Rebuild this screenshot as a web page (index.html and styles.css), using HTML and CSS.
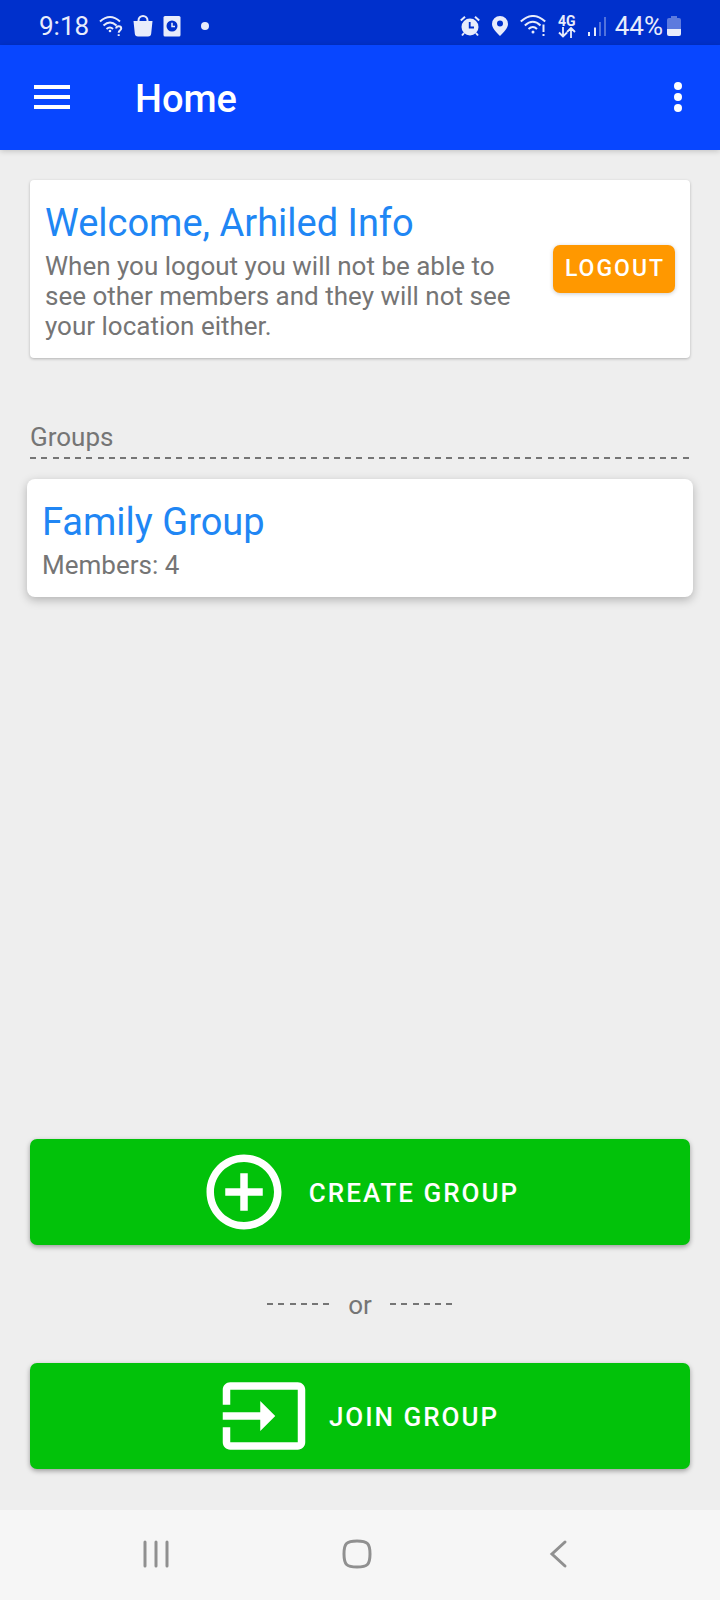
FILE: index.html
```
<!DOCTYPE html>
<html lang="en">
<head>
<meta charset="utf-8">
<meta name="viewport" content="width=device-width, initial-scale=1">
<title>Home</title>
<link rel="stylesheet" href="styles.css">
</head>
<body>
<div class="screen">
  <div class="status">
    <div class="status-side status-left">
      <span class="clock">9:18</span>
      <svg width="24" height="22" viewBox="0 0 24 22" fill="none" stroke="currentColor" stroke-width="2">
        <path d="M1 6.500Q11-2.500 21 6.500M4.500 10.500Q11 4.500 17.500 10.500M7.500 14Q11 11 14 14"/>
        <circle cx="11" cy="16" r="1.300" fill="currentColor" stroke="none"/>
        <path d="M17.200 13.500C17.200 10.500 22.200 10.500 22.200 13.500C22.200 15.300 19.700 15.200 19.700 17.800M19.700 19.200V21"/>
      </svg>
      <svg width="20" height="22" viewBox="0 0 20 22" fill="currentColor">
        <path d="M.500 6H19.500L18.200 18.500Q18 21.500 15 21.500H5Q2 21.500 1.800 18.500Z"/>
        <path d="M5.500 7V5.500A4.500 4.500 0 0 1 14.500 5.500V7" fill="none" stroke="currentColor" stroke-width="2"/>
      </svg>
      <svg width="18" height="22" viewBox="0 0 18 22">
        <rect x=".500" y="1" width="17" height="20.500" rx="1.500" fill="currentColor"/>
        <circle cx="9" cy="11" r="5.500" fill="#0030cc"/>
        <path d="M9 7.800V11.500H12" fill="none" stroke="currentColor" stroke-width="1.500"/>
      </svg>
      <span class="dot"></span>
    </div>
    <div class="status-side status-right">
      <svg width="20" height="22" viewBox="0 0 20 22">
        <circle cx="10" cy="12" r="8.500" fill="currentColor"/>
        <path d="M.800 5.500L5 1.800M19.200 5.500L15 1.800M4 18L2 20.500M16 18L18 20.500" stroke="currentColor" stroke-width="2"/>
        <path d="M9.700 7V12.500H14" fill="none" stroke="#0030cc" stroke-width="1.800"/>
      </svg>
      <svg width="16" height="22" viewBox="0 0 16 22" fill="currentColor">
        <path fill-rule="evenodd" d="M8 1A8 8 0 0 0 0 9C0 13 4 17 8 21C12 17 16 13 16 9A8 8 0 0 0 8 1ZM8 5.500A3 3 0 1 1 8 11.500A3 3 0 1 1 8 5.500Z"/>
      </svg>
      <svg width="26" height="22" viewBox="0 0 26 22" fill="none" stroke="currentColor" stroke-width="2">
        <path d="M.800 6.500Q13-4.500 25.200 6.500M4.800 10.500Q13 3 20.500 10.500M8.500 14Q13 10 17 14M23.500 9.500V17M23.500 19V21"/>
        <circle cx="13" cy="17" r="1.500" fill="currentColor" stroke="none"/>
      </svg>
      <span class="network">
        <span>4G</span>
        <svg width="18" height="11" viewBox="0 0 18 11" fill="none" stroke="currentColor" stroke-width="1.800"><path d="M5 0V9M1 5.500L5 9.500L9 5.500M13 11V1.500M9 5L13 1L17 5"/></svg>
      </span>
      <svg width="18" height="22" viewBox="0 0 18 22" stroke="currentColor" stroke-width="2"><path d="M1 21V17M7 21V12.500"/><path opacity=".35" d="M12 21V7M17 21V2"/></svg>
      <span class="battery">
        <span>44%</span>
        <svg width="14" height="22" viewBox="0 0 14 22" fill="currentColor"><path opacity=".4" d="M4 1H10V3H12Q14 3 14 5V14H0V5Q0 3 2 3H4Z"/><path d="M0 14H14V19Q14 21 12 21H2Q0 21 0 19Z"/></svg>
      </span>
    </div>
  </div>

  <header class="appbar">
    <button class="icon-button" type="button" aria-label="Open menu">
      <svg width="36" height="26" viewBox="0 0 36 26" stroke="currentColor" stroke-width="4"><path d="M0 3H36M0 13H36M0 23H36"/></svg>
    </button>
    <h1 class="appbar-title">Home</h1>
    <button class="icon-button" type="button" aria-label="More options">
      <svg width="8" height="32" viewBox="0 0 8 32" fill="currentColor"><circle cx="4" cy="5" r="4"/><circle cx="4" cy="16" r="4"/><circle cx="4" cy="27" r="4"/></svg>
    </button>
  </header>

  <main class="content">
    <section class="card welcome">
      <div class="welcome-text">
        <h2 class="card-title">Welcome, Arhiled Info</h2>
        <p class="card-body">When you logout you will not be able to see other members and they will not see your location either.</p>
      </div>
      <button class="logout" type="button">LOGOUT</button>
    </section>

    <h3 class="groups-label">Groups</h3>
    <div class="dashes"></div>

    <section class="card group">
      <h2 class="card-title">Family Group</h2>
      <p class="card-body">Members: 4</p>
    </section>

    <div class="actions">
      <button class="action" type="button">
        <svg width="90" height="90" viewBox="0 0 24 24" fill="currentColor"><path d="M13 7h-2v4H7v2h4v4h2v-4h4v-2h-4V7zm-1-5C6.480 2 2 6.480 2 12s4.480 10 10 10 10-4.480 10-10S17.520 2 12 2zm0 18c-4.410 0-8-3.590-8-8s3.590-8 8-8 8 3.590 8 8-3.590 8-8 8z"/></svg>
        <span>CREATE GROUP</span>
      </button>
      <div class="or">
        <span class="dashes or-dashes"></span>
        <span>or</span>
        <span class="dashes or-dashes"></span>
      </div>
      <button class="action" type="button">
        <svg width="90" height="90" viewBox="0 0 24 24" fill="currentColor"><path d="M21 3.010H3c-1.100 0-2 .900-2 2V9h2V4.990h18v14.030H3V15H1v4.010c0 1.100.900 1.980 2 1.980h18c1.100 0 2-.880 2-1.980v-14c0-1.110-.900-2-2-2zM11 16l4-4-4-4v3H1v2h10v3z"/></svg>
        <span>JOIN GROUP</span>
      </button>
    </div>
  </main>

  <nav class="navbar" aria-label="System navigation">
    <button class="nav-button" type="button" aria-label="Recent apps">
      <svg width="32" height="32" viewBox="0 0 32 32" fill="none" stroke="currentColor" stroke-width="3" stroke-linecap="round"><path d="M5 4V28M16 4V28M27 4V28"/></svg>
    </button>
    <button class="nav-button" type="button" aria-label="Home screen">
      <svg width="32" height="32" viewBox="0 0 32 32" fill="none" stroke="currentColor" stroke-width="3"><path d="M16 3C26.500 3 29 5.500 29 16S26.500 29 16 29S3 26.500 3 16S5.500 3 16 3Z"/></svg>
    </button>
    <button class="nav-button" type="button" aria-label="Back">
      <svg width="32" height="32" viewBox="0 0 32 32" fill="none" stroke="currentColor" stroke-width="3" stroke-linecap="round"><path d="M23 4L10 16L23 28"/></svg>
    </button>
  </nav>
</div>
</body>
</html>
```
FILE: styles.css
```
* {
  box-sizing: border-box;
}

body {
  margin: 0;
  background: #eeeeee;
  color: #757575;
  font-family: Roboto, "Liberation Sans", sans-serif;
  font-size: 26px;
  line-height: 30px;
}

h1, h2, h3, p {
  margin: 0;
  font-weight: 400;
}

button {
  margin: 0;
  padding: 0;
  border: 0;
  background: none;
  color: inherit;
  font: inherit;
}

svg {
  display: block;
  flex: none;
}

.screen {
  display: flex;
  flex-direction: column;
  min-height: 100vh;
}

.status {
  display: flex;
  justify-content: space-between;
  align-items: center;
  height: 45px;
  padding: 7px 39px 0;
  background: #0030cc;
  color: #e8ecfb;
}

.status-side {
  display: flex;
  align-items: center;
}

.status-left {
  gap: 10px;
}

.status-right {
  gap: 12px;
}

.dot {
  width: 8px;
  height: 8px;
  margin-left: 10px;
  border-radius: 50%;
  background: #e8ecfb;
}

.network {
  display: flex;
  flex-direction: column;
  align-items: center;
  font-size: 14px;
  font-weight: 700;
  line-height: 12px;
}

.battery {
  display: flex;
  align-items: center;
  gap: 4px;
  margin-left: -3px;
}

.appbar {
  display: flex;
  align-items: center;
  height: 105px;
  padding: 0 38px 2px 34px;
  background: #0846ff;
  color: #ffffff;
  box-shadow: 0 1px 6px rgba(0, 0, 0, 0.2);
}

.appbar-title {
  flex: 1;
  padding: 4px 0 0 65px;
  font-size: 38px;
  font-weight: 500;
  line-height: 44px;
}

.icon-button {
  display: flex;
}

.content {
  display: flex;
  flex: 1;
  flex-direction: column;
  padding: 30px 30px 41px;
}

.card {
  padding: 17px 15px;
  background: #ffffff;
}

.card-title {
  padding: 4px 0 5px;
  color: #2086f4;
  font-size: 38px;
  line-height: 45px;
}

.welcome {
  display: flex;
  align-items: center;
  gap: 15px;
  border-radius: 4px;
  box-shadow: 0 1px 3px rgba(0, 0, 0, 0.25);
}

.welcome-text {
  flex: 1;
}

.logout {
  height: 48px;
  padding: 0 10px 0 12px;
  border-radius: 7px;
  background: #ff9800;
  box-shadow: 0 1px 4px rgba(0, 0, 0, 0.2);
  color: #ffffff;
  font-size: 23px;
  font-weight: 500;
  letter-spacing: 2px;
}

.groups-label {
  margin-top: 64px;
  font-size: 26px;
}

.dashes {
  height: 2px;
  margin-top: 5px;
  background: repeating-linear-gradient(90deg,
    #757575 0 6px, transparent 6px 11px,
    #757575 11px 17px, transparent 17px 23px,
    #757575 23px 29px, transparent 29px 34px,
    #757575 34px 40px, transparent 40px 45px);
}

.group {
  margin: 20px -3px 0;
  border-radius: 8px;
  box-shadow: 0 3px 10px rgba(0, 0, 0, 0.25);
}

.actions {
  margin-top: auto;
}

.action {
  display: flex;
  align-items: center;
  justify-content: center;
  gap: 20px;
  width: 100%;
  height: 106px;
  padding-right: 2px;
  border-radius: 7px;
  background: #02c20a;
  box-shadow: 0 2px 5px rgba(0, 0, 0, 0.35);
  color: #ffffff;
  font-weight: 500;
  letter-spacing: 2px;
}

.action span {
  padding-top: 2px;
}

.or {
  display: flex;
  align-items: center;
  justify-content: center;
  gap: 18px;
  padding: 45px 0 43px;
}

.or-dashes {
  width: 63px;
  margin: 0 0 2px;
}

.navbar {
  display: flex;
  align-items: center;
  justify-content: center;
  height: 90px;
  padding: 0 21px 3px 15px;
  background: #f6f6f6;
  color: #909090;
}

.nav-button {
  display: flex;
  flex: 0 1 201px;
  justify-content: center;
}
```
